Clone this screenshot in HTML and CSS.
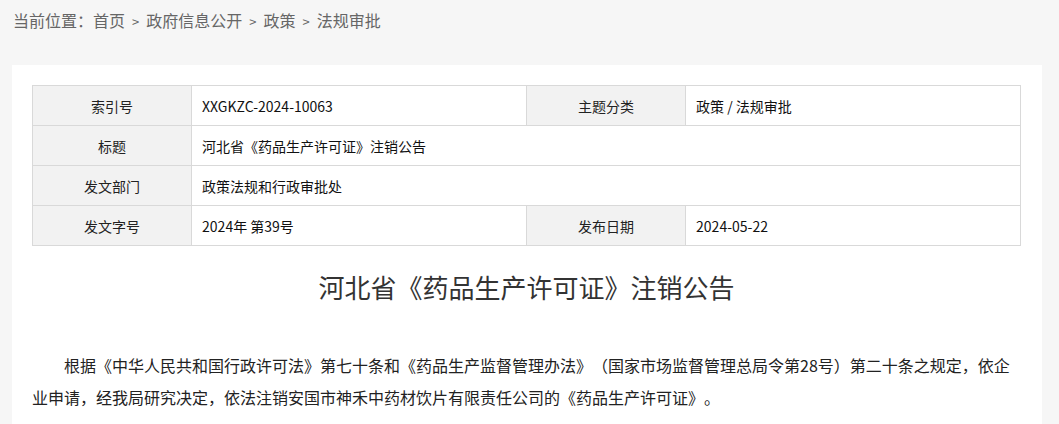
FILE: index.html
```html
<!DOCTYPE html>
<html lang="zh-CN">
    <head>
        <meta charset="UTF-8" />
        <meta name="viewport" content="width=device-width, initial-scale=1.0" />
        <title>河北省《药品生产许可证》注销公告</title>
        <link rel="stylesheet" href="styles.css">
    </head>
    <body>
        <div class="crumb">
            当前位置：<a href="#">首页</a><span class="sep">&gt;</span><a href="#">政府信息公开</a><span class="sep">&gt;</span><a href="#">政策</a><span class="sep">&gt;</span><a href="#">法规审批</a>
        </div>
        <div class="panel">
            <table class="info-table">
                <tbody>
                    <tr>
                        <td class="label">索引号</td>
                        <td class="value">XXGKZC-2024-10063</td>
                        <td class="label">主题分类</td>
                        <td class="value">政策 / 法规审批</td>
                    </tr>
                    <tr>
                        <td class="label">标题</td>
                        <td class="value" colspan="3">河北省《药品生产许可证》注销公告</td>
                    </tr>
                    <tr>
                        <td class="label">发文部门</td>
                        <td class="value" colspan="3">政策法规和行政审批处</td>
                    </tr>
                    <tr>
                        <td class="label">发文字号</td>
                        <td class="value">2024年 第39号</td>
                        <td class="label">发布日期</td>
                        <td class="value">2024-05-22</td>
                    </tr>
                </tbody>
            </table>
            <h1 class="doc-title">河北省《药品生产许可证》注销公告</h1>
            <div class="doc-body">
                <p>根据《中华人民共和国行政许可法》第七十条和《药品生产监督管理办法》（国家市场监督管理总局令第28号）第二十条之规定，依企业申请，经我局研究决定，依法注销安国市神禾中药材饮片有限责任公司的《药品生产许可证》。</p>
            </div>
        </div>
    </body>
</html>
```

FILE: styles.css
```css
body {
    margin: 0;
    background-color: #f6f6f6;
    font-family: "Noto Sans CJK SC", "Noto Sans", sans-serif;
    color: #333333;
    text-spacing-trim: space-all;
}

/* breadcrumb */
.crumb {
    height: 40px;
    line-height: 40px;
    padding: 0 13px;
    font-size: 16px;
    color: #666666;
}

.crumb a {
    color: #666666;
    text-decoration: none;
}

.crumb .sep {
    margin: 0 7px;
    font-size: 13px;
}

.panel {
    width: 989px;
    margin: 25px 0 0 12px;
    padding: 20px 21px 20px 20px;
    background-color: #ffffff;
}

.info-table {
    width: 100%;
    border-collapse: collapse;
    font-size: 14px;
    table-layout: fixed;
}

.info-table td {
    border: 1px solid #d9d9d9;
    height: 39px;
    padding: 0;
    line-height: 20px;
}

.info-table td.label {
    width: 16%;
    background-color: #f2f2f2;
    text-align: center;
    color: #222222;
}

.info-table td.value {
    padding-left: 10px;
    color: #111111;
}

.doc-title {
    margin: 21px 0 0;
    font-size: 26px;
    font-weight: normal;
    line-height: 40px;
    text-align: center;
    color: #333333;
}

.doc-body {
    margin-top: 42px;
}

.doc-body p {
    margin: 0;
    font-size: 16px;
    line-height: 32px;
    text-indent: 2em;
    color: #222222;
}
```
